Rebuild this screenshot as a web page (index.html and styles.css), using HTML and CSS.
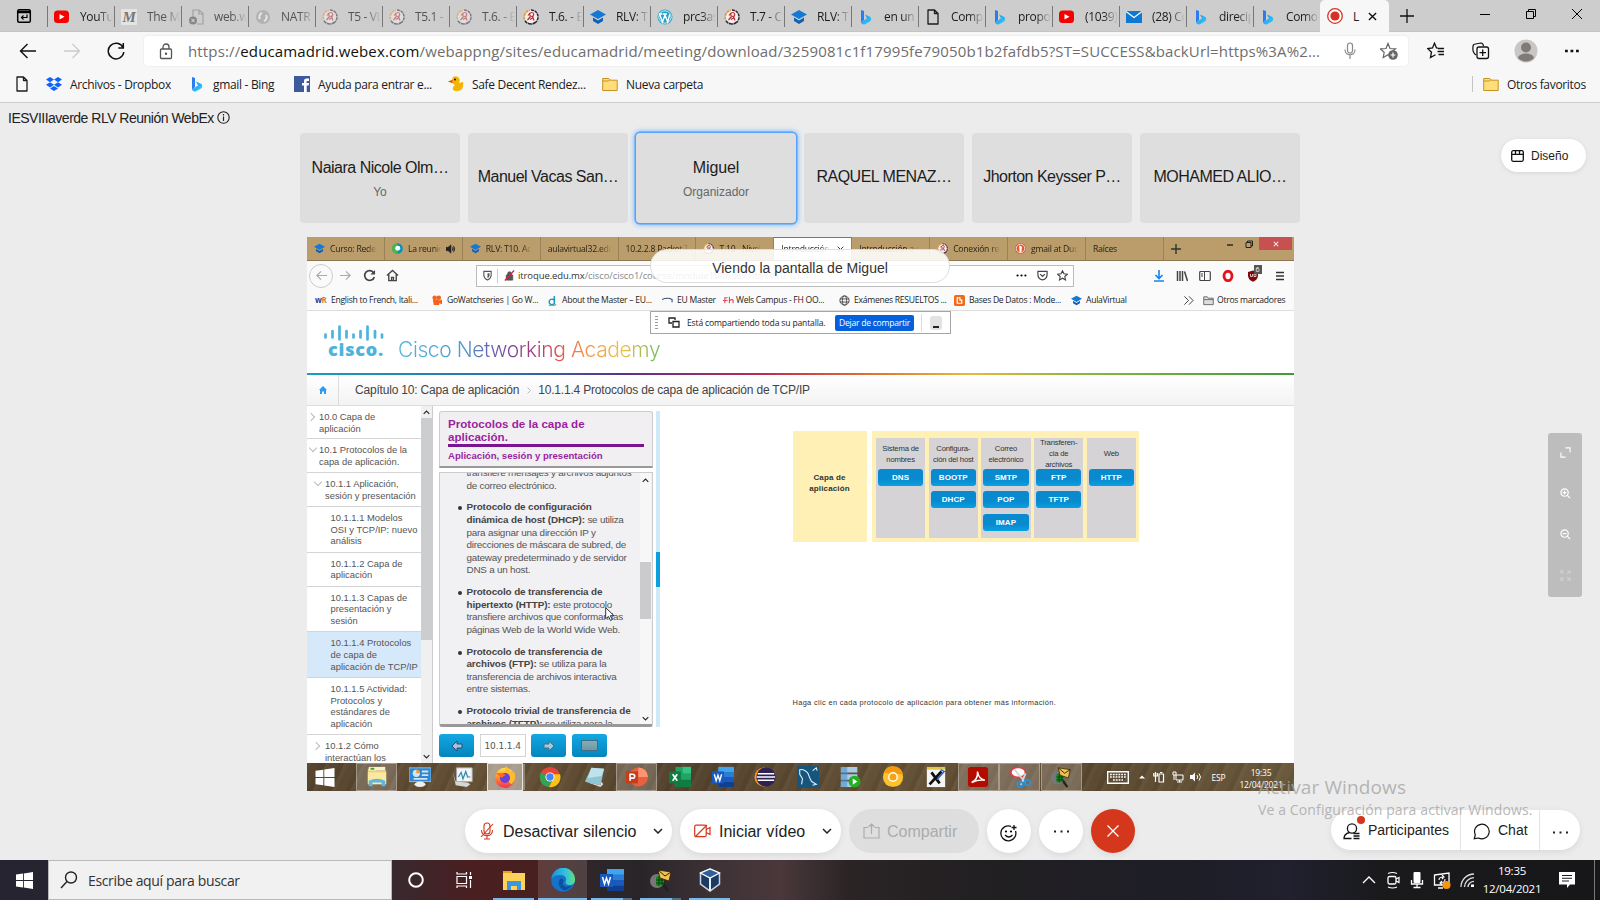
FILE: index.html
```html
<!DOCTYPE html>
<html lang="es">
<head>
<meta charset="utf-8">
<title>IESVIIIaverde RLV Reunión WebEx</title>
<link rel="stylesheet" href="styles.css">
</head>
<body>
<svg class="defs" width="0" height="0">
  <defs>
    <linearGradient id="gb" x1="0" y1="0" x2="1" y2="1"><stop offset="0" stop-color="#2a8cf0"/><stop offset="1" stop-color="#2fd0f5"/></linearGradient>
    <linearGradient id="ge" x1="0" y1="0" x2="1" y2="0"><stop offset="0" stop-color="#1b8fd8"/><stop offset=".6" stop-color="#35c1e0"/><stop offset="1" stop-color="#5fe07a"/></linearGradient>
    <linearGradient id="gf" x1="0" y1="0" x2="0" y2="1"><stop offset="0" stop-color="#ffe14d"/><stop offset=".5" stop-color="#ff8a2a"/><stop offset="1" stop-color="#f0305a"/></linearGradient>
  </defs>
  <symbol id="yt" viewBox="0 0 16 16"><rect y="1.5" width="15" height="12.5" rx="3.5" fill="#f60000"/><path d="M5.5 5v5.5L10.5 7.7z" fill="#fff"/></symbol>
  <symbol id="bing" viewBox="0 0 16 16"><path d="M3 1l3 1v9l-3 2.5z" fill="#2a7cf0"/><path d="M7 5.500l5 2.300c2 1.400 1.300 4-.4 5L7 15.300c-1.500.7-3.500 0-4-2L9 9.600z" fill="url(#gb)"/></symbol>
  <symbol id="cap" viewBox="0 0 16 16"><path d="M8 1L0 5.500 8 10l8-4.500z" fill="#1478d4"/><path d="M3 8.500v3.500l5 3 5-3V8.500l-5 3z" fill="#0d62b5"/></symbol>
  <symbol id="moodle" viewBox="0 0 16 16"><circle cx="8" cy="8" r="7" fill="#f6efe9"/><path d="M8 1a7 7 0 0 1 5 11.900" fill="none" stroke="#2b2440" stroke-width="1.500" stroke-dasharray="3 .7"/><path d="M13 12.900A7 7 0 0 1 2 11.600" fill="none" stroke="#2b2440" stroke-width="1.700" stroke-dasharray="4 .7"/><path d="M1.600 10.500A7 7 0 0 1 7 1.200" stroke="#d99a3c" stroke-width="1.600" fill="none" stroke-dasharray="3 .7"/><circle cx="8.700" cy="5.500" r="2" fill="none" stroke="#c8323a" stroke-width="1.200"/><path d="M7.500 7.500L4.500 11M9.500 7.500l1.500 4M7 4L5 6.500M7 10.500l2.500-1.500" stroke="#b02c3c" stroke-width="1.200"/></symbol>
  <symbol id="page" viewBox="0 0 16 16"><path d="M3 1h6.500L13 4.500V15H3zM9.500 1v3.500H13" fill="none" stroke="currentColor" stroke-width="1.300" stroke-linejoin="round"/></symbol>
  <symbol id="folder" viewBox="0 0 16 16"><path d="M.7 2.500h6l1.500 1.700h7V14.500H.7z" fill="#ffdd7d" stroke="#c4941c"/><path d="M.7 5h5.500l2-1.500" fill="none" stroke="#c4941c"/></symbol>
  <symbol id="word" viewBox="0 0 24 24"><path d="M7 1h17v22H7z" fill="#2b7cd3"/><path d="M7 1h17v5.500H7z" fill="#41a5ee"/><path d="M7 12h17v5.500H7z" fill="#185abd"/><path d="M7 17.500h17V23H7z" fill="#103f91"/><path d="M0 6h13v13H0z" fill="#185abd"/><path d="M2.500 9l2 7 2-6 2 6 2-7" stroke="#fff" stroke-width="1.500" fill="none"/></symbol>
  <symbol id="tracer" viewBox="0 0 24 24"><path d="M14 16l5 7" stroke="#222" stroke-width="2.500"/><circle cx="8" cy="13" r="7" fill="#777"/><path d="M7 9l8-3-1 11-7 1z" fill="#168d22"/><path d="M7 12h8M7 15h8M10 8v10M13 7v10" stroke="#062c08" stroke-width=".8"/><path d="M9 2l13 2-2 9-9-3z" fill="#efc255" stroke="#332200" stroke-width=".8"/><path d="M9 2l7 6 6-4" fill="none" stroke="#332200"/></symbol>
  <symbol id="files" viewBox="0 0 24 24"><path d="M1 3h9v18H1z" fill="#e3a21a"/><path d="M1 5h22v17H1z" fill="#fbd25a"/><path d="M5 13h14v9h-4v-4H9v4H5z" fill="#3b96dd"/></symbol>
  <symbol id="win" viewBox="0 0 16 16"><path d="M0 2.300L6.600 1.400V7.600H0zM7.400 1.300L16 0v7.600H7.400zM0 8.400h6.600v6.200L0 13.700zM7.400 8.400H16V16l-8.600-1.300z" fill="#fff"/></symbol>
  <symbol id="mag" viewBox="0 0 12 12"><circle cx="5" cy="5" r="4" fill="none" stroke="#fff" stroke-width="1.300"/><path d="M8 8l3 3M3 5h4" stroke="#fff" stroke-width="1.300"/></symbol>
  <symbol id="chev" viewBox="0 0 10 6"><path d="M1 1l4 4 4-4" fill="none" stroke="currentColor" stroke-width="1.500"/></symbol>
  <symbol id="globe" viewBox="0 0 12 12"><g fill="none" stroke="#444"><circle cx="6" cy="6" r="5"/><ellipse cx="6" cy="6" rx="2.300" ry="5"/><path d="M1 4.300h10M1 7.700h10"/></g></symbol>
</svg>

<header class="tabs">
  <div class="tabs-home"><svg width="16" height="16" viewBox="0 0 16 16"><rect x="1.700" y="1.700" width="12.600" height="12.600" rx="1.500" fill="none" stroke="#000" stroke-width="1.500"/><path d="M1.500 4h13" stroke="#000" stroke-width="2.500"/><path d="M11 6.500v3H5.500M7.500 7.500l-2 2 2 2" fill="none" stroke="#000" stroke-width="1.200"/></svg></div>
  <div class="tab"><svg><use href="#yt"/></svg><span>YouTube</span></div>
  <div class="tab dim"><i class="m-icon">M</i><span>The Me</span></div>
  <div class="tab dim"><svg viewBox="0 0 16 16"><path d="M5 8V1h6l4 3.500V15H9M11 1v4h4" fill="none" stroke="#777" stroke-width="1.200"/><circle cx="5" cy="11.500" r="4" fill="#444"/><path d="M3.500 10l3 3m0-3l-3 3" stroke="#fff"/></svg><span>web.wh</span></div>
  <div class="tab dim"><svg viewBox="0 0 16 16"><circle cx="8" cy="8" r="7" fill="#999"/><path d="M5 10a4 4 0 0 1 2-6M11 6a4 4 0 0 1-2 6" fill="none" stroke="#fff" stroke-width="2"/></svg><span>NATR</span></div>
  <div class="tab dim"><svg><use href="#moodle"/></svg><span>T5 - VL</span></div>
  <div class="tab dim"><svg><use href="#moodle"/></svg><span>T5.1 - E</span></div>
  <div class="tab dim"><svg><use href="#moodle"/></svg><span>T.6. - E</span></div>
  <div class="tab"><svg><use href="#moodle"/></svg><span>T.6. - E</span></div>
  <div class="tab"><svg><use href="#cap"/></svg><span>RLV: T1</span></div>
  <div class="tab"><svg viewBox="0 0 16 16"><circle cx="8" cy="8" r="7.500" fill="#21a1c9"/><circle cx="8" cy="8" r="6.200" fill="none" stroke="#fff" stroke-width=".8"/><path d="M2.500 5l3 8L8 6l2.700 7 2-7.500M2 5h3.500M6 5h4" fill="none" stroke="#fff" stroke-width="1.400"/></svg><span>prc3as</span></div>
  <div class="tab"><svg><use href="#moodle"/></svg><span>T.7 - C</span></div>
  <div class="tab"><svg><use href="#cap"/></svg><span>RLV: T1</span></div>
  <div class="tab"><svg><use href="#bing"/></svg><span>en un r</span></div>
  <div class="tab"><svg><use href="#page"/></svg><span>Compa</span></div>
  <div class="tab"><svg><use href="#bing"/></svg><span>propor</span></div>
  <div class="tab"><svg><use href="#yt"/></svg><span>(1039)</span></div>
  <div class="tab"><svg viewBox="0 0 16 16"><path d="M0 2h16v12H0z" fill="#0f78d4"/><path d="M0 2.500l8 6 8-6" fill="none" stroke="#fff" stroke-width="1.200"/></svg><span>(28) Co</span></div>
  <div class="tab"><svg><use href="#bing"/></svg><span>direcip</span></div>
  <div class="tab"><svg><use href="#bing"/></svg><span>Como</span></div>
  <div class="tab active"><svg viewBox="0 0 16 16"><circle cx="8" cy="8" r="7.300" fill="#fff" stroke="#d93025" stroke-width="1.300"/><circle cx="8" cy="8" r="4.600" fill="#d93025"/></svg><span>L</span><svg class="x" viewBox="0 0 10 10"><path d="M1 1l8 8M9 1L1 9" stroke="#111" stroke-width="1.500"/></svg></div>
  <svg class="plus" viewBox="0 0 14 14"><path d="M7 0v14M0 7h14" stroke="#111" stroke-width="1.300"/></svg>
  <div class="wbtns">
    <svg viewBox="0 0 12 12"><path d="M1 6.500h10" stroke="#000"/></svg>
    <svg viewBox="0 0 12 12"><path d="M1.500 3.500h7v7h-7zM3.500 3.500v-2h7v7h-2" fill="none" stroke="#000"/></svg>
    <svg viewBox="0 0 12 12"><path d="M1 1l10 10M11 1L1 11" stroke="#000"/></svg>
  </div>
</header>

<div class="toolbar">
  <svg class="nav" viewBox="0 0 18 18"><path d="M17 9H1.500M8.500 2l-7 7 7 7" fill="none" stroke="#111" stroke-width="1.400"/></svg>
  <svg class="nav" viewBox="0 0 18 18"><path d="M1 9h15.500M9.500 2l7 7-7 7" fill="none" stroke="#ccc" stroke-width="1.300"/></svg>
  <svg class="nav" viewBox="0 0 18 18"><path d="M16 5.500A7.800 7.800 0 1 0 16.800 10M16.300 1v5h-5" fill="none" stroke="#111" stroke-width="1.500"/></svg>
  <div class="url">
    <svg width="14" height="17" viewBox="0 0 14 17"><rect x="1.500" y="6" width="11" height="9.500" rx="1" fill="none" stroke="#555" stroke-width="1.300"/><path d="M4 6V4a3 3 0 0 1 6 0v2" fill="none" stroke="#555" stroke-width="1.300"/><circle cx="7" cy="10.800" r="1.200" fill="#555"/></svg>
    <span class="url-text">https://<b>educamadrid.webex.com</b>/webappng/sites/educamadrid/meeting/download/3259081c1f17995fe79050b1b2fafdb5?ST=SUCCESS&amp;backUrl=https%3A%2...</span>
    <svg class="mic" width="12" height="18" viewBox="0 0 12 18"><rect x="3.500" y="1" width="5" height="10" rx="2.500" fill="none" stroke="#888" stroke-width="1.200"/><path d="M1 7.500c0 7 10 7 10 0M6 13v4" fill="none" stroke="#888" stroke-width="1.200"/></svg>
    <svg width="18" height="18" viewBox="0 0 18 18"><path d="M8 1.500l2 5 5.500.3-4 3.500 1 5.200L8 12.800l-4.800 2.700 1-5.200-4-3.500L6 6.500z" fill="none" stroke="#666" stroke-width="1.200"/><circle cx="13" cy="13" r="4.800" fill="#666"/><path d="M13 10.500v5M10.500 13h5" stroke="#fff" stroke-width="1.200"/></svg>
  </div>
  <div class="tools">
    <svg width="18" height="18" viewBox="0 0 18 18"><path d="M11 6.200L9.500 6l-2-4.800-2 4.800L.8 6.600l3.700 3.600-1 5.300 5-2.800M11 6.500h6M10.500 9.500H17M11.500 12.500H17" fill="none" stroke="#111" stroke-width="1.300"/></svg>
    <svg width="18" height="18" viewBox="0 0 18 18"><path d="M4 13C1 11 .5 8 1 4.500Q1 2 3.500 2L9 1q2 0 2.500 3" fill="none" stroke="#111" stroke-width="1.200"/><rect x="5" y="5" width="11.500" height="11.500" rx="2" fill="none" stroke="#111" stroke-width="1.300"/><path d="M10.700 7.500v6.500M7.500 10.700H14" stroke="#111" stroke-width="1.300"/></svg>
    <svg width="24" height="24" viewBox="0 0 24 24"><circle cx="12" cy="12" r="11.500" fill="#c9c7c5"/><circle cx="12" cy="8.500" r="5" fill="#7e7b79"/><path d="M4 19c1-6 15-6 16 0a11 11 0 0 1-16 0z" fill="#7e7b79"/></svg>
    <svg width="14" height="4" viewBox="0 0 14 4"><path d="M0 .8h2.800v2.400H0zM5.500.8h2.800v2.400H5.500zM11 .8h2.800v2.400H11z" fill="#111"/></svg>
  </div>
</div>

<div class="favs">
  <svg width="16" height="18"><use href="#page"/></svg>
  <svg width="16" height="16" viewBox="0 0 16 16"><path d="M4 1l4 2.600-4 2.600-4-2.600zM12 1l4 2.600-4 2.600-4-2.600zM4 6.200l4 2.600-4 2.600-4-2.600zM12 6.200l4 2.600-4 2.600-4-2.600zM8 10l4 2.500-4 2.500-4-2.500z" fill="#0f62fe"/></svg><span>Archivos - Dropbox</span>
  <svg width="16" height="16"><use href="#bing"/></svg><span>gmail - Bing</span>
  <svg width="16" height="16" viewBox="0 0 16 16"><path d="M0 0h16v16H0z" fill="#3d5a9e"/><path d="M10 16V9.500h-2V7h2V5q0-2.500 2.500-2.500H15V5h-1.500q-1 0-1 1v1H15l-.3 2.500h-2V16z" fill="#fff"/></svg><span>Ayuda para entrar e...</span>
  <svg width="16" height="16" viewBox="0 0 16 16"><path d="M5 1q5-2 6.500 2 .5 3-1 4l4.500-1q1 5-2 8-4 2-7 .5Q3 12 7 9 5 8 4.500 7L0 5.500 4 4z" fill="#f5b400"/><path d="M0 5.500L4.500 4v3z" fill="#e2452d"/><circle cx="7" cy="3.500" r=".9"/></svg><span>Safe Decent Rendez...</span>
  <svg width="16" height="16"><use href="#folder"/></svg><span>Nueva carpeta</span>
  <i class="favs-sep"></i>
  <svg width="16" height="16"><use href="#folder"/></svg><span>Otros favoritos</span>
</div>

<main class="meeting">
  <div class="title">IESVIIIaverde RLV Reunión WebEx <svg width="13" height="13" viewBox="0 0 13 13"><circle cx="6.500" cy="6.500" r="5.700" fill="none" stroke="#222" stroke-width="1.100"/><path d="M6.500 5.500V10M6.500 3v1.400" stroke="#222" stroke-width="1.200"/></svg></div>

  <div class="people">
    <div class="tile"><b>Naiara Nicole Olm…</b><small>Yo</small></div>
    <div class="tile solo"><b>Manuel Vacas San…</b></div>
    <div class="tile speaking"><b>Miguel</b><small>Organizador</small></div>
    <div class="tile solo"><b>RAQUEL MENAZ…</b></div>
    <div class="tile solo"><b>Jhorton Keysser P…</b></div>
    <div class="tile solo"><b>MOHAMED ALIO…</b></div>
    <button class="layout-btn"><svg width="13" height="12" viewBox="0 0 13 12"><rect x=".7" y=".7" width="11.600" height="10.600" rx="1.500" fill="none" stroke="#111" stroke-width="1.300"/><path d="M.7 4.300h11.600M4.500.7v3.600M8.500.7v3.600" stroke="#111" stroke-width="1.300"/></svg>Diseño</button>
  </div>

  <div class="stage">
    <section class="screen">
      <div class="s-tabs">
        <div class="s-tab"><svg><use href="#cap"/></svg><span>Curso: Redes</span></div>
        <div class="s-tab"><svg viewBox="0 0 12 12"><circle cx="6" cy="6" r="5.800" fill="#0b8fb8"/><path d="M6 .2a5.800 5.800 0 0 0 0 11.600z" fill="#4ab848"/><circle cx="6.300" cy="5.800" r="2.700" fill="#fff"/></svg><span class="short">La reunión</span><svg class="snd" viewBox="0 0 12 12"><path d="M0 4h2.500L6 1v10L2.500 8H0zM7.500 3.500q2 2.500 0 5M9 2q3 4 0 8" fill="#222" stroke="#222" stroke-width=".6"/></svg></div>
        <div class="s-tab"><svg><use href="#cap"/></svg><span>RLV: T10. Ac</span></div>
        <div class="s-tab"><span>aulavirtual32.edu</span></div>
        <div class="s-tab"><span>10.2.2.8 Packet T</span></div>
        <div class="s-tab"><svg><use href="#moodle"/></svg><span>T.10 - Nivel</span></div>
        <div class="s-tab on"><span>Introducción</span><svg class="sx" viewBox="0 0 10 10"><path d="M1 1l8 8M9 1L1 9" stroke="#333" stroke-width="1.400"/></svg></div>
        <div class="s-tab"><span>Introducción a r</span></div>
        <div class="s-tab"><svg><use href="#moodle"/></svg><span>Conexión rem</span></div>
        <div class="s-tab"><svg viewBox="0 0 12 12"><circle cx="6" cy="6" r="5.800" fill="#de5833"/><circle cx="6" cy="6" r="4.600" fill="none" stroke="#fff" stroke-width=".8"/><path d="M4.500 3q3-.5 3 2l-.5 5H5z" fill="#fff"/></svg><span>gmail at Duc</span></div>
        <div class="s-tab last"><span>Raíces</span></div>
        <svg class="s-plus" viewBox="0 0 10 10"><path d="M5 0v10M0 5h10" stroke="#333" stroke-width="1.400"/></svg>
        <div class="s-win"><svg viewBox="0 0 8 8"><path d="M1 5h6" stroke="#222" stroke-width="1.400"/></svg><svg viewBox="0 0 8 8"><path d="M1 2.500h5v5H1zM2.500 2.500V1h5v5H6" fill="none" stroke="#222"/></svg></div>
        <div class="s-close"><svg viewBox="0 0 8 8"><path d="M1 1l6 6M7 1L1 7" stroke="#fff" stroke-width="1.400"/></svg></div>
      </div>

      <div class="s-bar">
        <i class="s-back"><svg viewBox="0 0 14 14"><path d="M13 7H2M6.500 2.500L2 7l4.500 4.500" fill="none" stroke="#aaa" stroke-width="1.300"/></svg></i>
        <svg viewBox="0 0 14 14"><path d="M1 7h11M7.500 2.500L12 7l-4.500 4.500" fill="none" stroke="#aaa" stroke-width="1.300"/></svg>
        <svg viewBox="0 0 14 14"><path d="M11.500 4A5.300 5.300 0 1 0 12.200 8.500" fill="none" stroke="#444" stroke-width="1.800"/><path d="M13 1v5H8z" fill="#444"/></svg>
        <svg viewBox="0 0 14 14"><path d="M1 7l6-5.500L13 7M3 6v6.500h8V6M6 12.500V9h2v3.500" fill="none" stroke="#444" stroke-width="1.500"/></svg>
        <div class="s-url">
          <svg viewBox="0 0 12 12"><path d="M2 1.500h8V6q-.5 3.500-4 5-3.500-1.500-4-5z" fill="none" stroke="#555" stroke-width="1.200"/><path d="M6 3.500V9q2-1 2.200-3V3.500z" fill="#555"/></svg>
          <i></i>
          <svg viewBox="0 0 12 12"><path d="M2.500 5.500h7v5.500h-7zM4 5.500V4q0-2 2-2t2 2v1.500" fill="#555" stroke="#555"/><path d="M1 11.500L11 .5" stroke="#d8204a" stroke-width="1.500"/></svg>
          <span><b>itroque.edu.mx</b>/cisco/cisco1/course/module10/index.html#10.1.1.4</span>
          <svg viewBox="0 0 14 12"><circle cx="2" cy="6" r="1.400"/><circle cx="7" cy="6" r="1.400"/><circle cx="12" cy="6" r="1.400"/></svg>
          <svg viewBox="0 0 12 12"><path d="M1 1.500h10V5q0 5-5 5.700Q1 10 1 5zM3.500 4.500L6 7l2.500-2.500" fill="none" stroke="#444" stroke-width="1.300"/></svg>
          <svg viewBox="0 0 12 12"><path d="M6 .8l1.600 3.400 3.700.4-2.800 2.500.8 3.800L6 9l-3.300 1.900.8-3.800L.7 4.600l3.700-.4z" fill="none" stroke="#444" stroke-width="1.200"/></svg>
        </div>
        <div class="s-ext">
          <svg viewBox="0 0 12 12"><path d="M6 0v8M2.500 5L6 8.500 9.500 5M1 11h10" fill="none" stroke="#1684e8" stroke-width="1.600"/></svg>
          <svg viewBox="0 0 12 12"><path d="M1.500 1v10M4 1v10M6.500 1v10M8.500 1.500l3 9.500" stroke="#444" stroke-width="1.500"/></svg>
          <svg viewBox="0 0 12 12"><rect x=".7" y="1.500" width="10.600" height="9" rx="1" fill="none" stroke="#444" stroke-width="1.200"/><path d="M5.500 1.500v9M2 4h2M2 6h2" stroke="#444"/></svg>
          <svg viewBox="0 0 12 12"><ellipse cx="6" cy="6" rx="4" ry="4.700" fill="none" stroke="#e5101c" stroke-width="2.800"/></svg>
          <span class="ublock"><svg viewBox="0 0 12 12"><path d="M1 2l5-1.500L11 2v4q-.5 4-5 5.800Q1.500 10 1 6z" fill="#800a0a"/><path d="M3.500 4v2.500h2V4M7 4v2.500h2V4z" fill="none" stroke="#fff" stroke-width=".7"/></svg><em>6</em></span>
          <svg viewBox="0 0 12 12"><path d="M2 2.500h8M2 6h8M2 9.500h8" stroke="#333" stroke-width="1.300"/></svg>
        </div>
      </div>

      <div class="s-marks">
        <i class="wr">w<b>R</b></i><span>English to French, Itali...</span>
        <svg viewBox="0 0 12 12"><circle cx="4" cy="3" r="2.500" fill="#f4641e"/><circle cx="8.500" cy="3" r="2.500" fill="#f4641e"/><path d="M2 5h7v6H3zM9 6l3-1v5l-3-1z" fill="#f4641e"/></svg><span>GoWatchseries | Go W...</span>
        <svg viewBox="0 0 12 12"><path d="M8 1v9M8 6a3 3 0 1 0 0 3" fill="none" stroke="#1e9ab8" stroke-width="1.600"/><path d="M2 11q4 2 8-1" stroke="#7ab83a" stroke-width="1.300" fill="none"/></svg><span>About the Master – EU...</span>
        <svg viewBox="0 0 12 12"><path d="M0 5q6-3 11 0v3" stroke="#36506a" stroke-width="1.200" fill="none"/></svg><span>EU Master</span>
        <svg viewBox="0 0 12 12"><path d="M2 9V3h3M0 6h5M7 2v7M7 6q4-2 4 0v3" stroke="#e0485a" stroke-width="1.200" fill="none"/></svg><span>Wels Campus - FH OO...</span>
        <svg><use href="#globe"/></svg><span>Exámenes RESUELTOS ...</span>
        <svg viewBox="0 0 12 12"><rect width="12" height="12" rx="2" fill="#f06a1a"/><path d="M3.500 3h3v2.500h2V9h-5z" fill="none" stroke="#fff" stroke-width="1.300"/></svg><span>Bases De Datos : Mode...</span>
        <svg><use href="#cap"/></svg><span>AulaVirtual</span>
        <svg viewBox="0 0 12 12"><path d="M1.500 1.500L6 6l-4.500 4.500M6.500 1.500L11 6l-4.500 4.500" fill="none" stroke="#333"/></svg>
        <svg viewBox="0 0 12 12"><path d="M.8 2h4l1 1.500h5.400v7H.8z" fill="#ddd" stroke="#666"/><path d="M1 5h10" stroke="#666"/></svg><span>Otros marcadores</span>
      </div>

      <div class="cisco">
        <div class="cisco-logo">
          <svg width="60" height="16" viewBox="0 0 60 16"><path d="M1.500 9.500v3M8.500 6v6.500M15.500 1.500v13M22.500 6v6.500M29.500 9.500v3M36.500 6v6.500M43.500 1.500v13M51 6v6.500M58 9.500v3" stroke="#4db3dc" stroke-width="2.700" stroke-linecap="round"/></svg>
          <b>cisco.</b>
        </div>
        <span class="academy">Cisco Networking Academy</span>
      </div>
      <div class="rainbow"></div>
      <div class="crumbs">
        <i><svg width="8" height="8" viewBox="0 0 8 8"><path d="M4 0L0 4h1v4h2V5.500h2V8h2V4h1z" fill="#2e9bf0"/></svg></i>
        <span>Capítulo 10: Capa de aplicación</span>
        <svg class="sep" width="4" height="7" viewBox="0 0 4 7"><path d="M.5.5l3 3-3 3" fill="none" stroke="#bbb"/></svg>
        <span>10.1.1.4 Protocolos de capa de aplicación de TCP/IP</span>
      </div>

      <div class="course">
        <nav class="toc">
          <div class="h1 folded first">10.0 Capa de<br>aplicación</div>
          <div class="h1 unfolded">10.1 Protocolos de la<br>capa de aplicación.</div>
          <div class="h2 unfolded">10.1.1 Aplicación,<br>sesión y presentación</div>
          <div class="h3 three">10.1.1.1 Modelos<br>OSI y TCP/IP: nuevo<br>análisis</div>
          <div class="h3">10.1.1.2 Capa de<br>aplicación</div>
          <div class="h3 three">10.1.1.3 Capas de<br>presentación y<br>sesión</div>
          <div class="h3 three cur">10.1.1.4 Protocolos<br>de capa de<br>aplicación de TCP/IP</div>
          <div class="h3 four">10.1.1.5 Actividad:<br>Protocolos y<br>estándares de<br>aplicación</div>
          <div class="h2 folded">10.1.2 Cómo<br>interactúan los</div>
        </nav>
        <div class="vscroll"><svg class="up"><use href="#chev"/></svg><i></i><svg><use href="#chev"/></svg></div>
        <div class="lesson">
          <header><h2>Protocolos de la capa de<br>aplicación.</h2><h3>Aplicación, sesión y presentación</h3></header>
          <div class="lesson-body">
            <div class="lesson-text">
              <p>transfiere mensajes y archivos adjuntos<br>de correo electrónico.</p>
              <p class="li"><b>Protocolo de configuración<br>dinámica de host (DHCP):</b> se utiliza<br>para asignar una dirección IP y<br>direcciones de máscara de subred, de<br>gateway predeterminado y de servidor<br>DNS a un host.</p>
              <p class="li"><b>Protocolo de transferencia de<br>hipertexto (HTTP):</b> este protocolo<br>transfiere archivos que conforman las<br>páginas Web de la World Wide Web.</p>
              <p class="li"><b>Protocolo de transferencia de<br>archivos (FTP):</b> se utiliza para la<br>transferencia de archivos interactiva<br>entre sistemas.</p>
              <p class="li"><b>Protocolo trivial de transferencia de<br>archivos (TFTP):</b> se utiliza para la</p>
            </div>
            <div class="lscroll"><svg class="up"><use href="#chev"/></svg><i></i><svg><use href="#chev"/></svg></div>
            <svg class="cursor" width="10" height="15" viewBox="0 0 10 15"><path d="M.7.700v11l2.800-2.200 2 4 1.800-1-2-3.800h3.700z" fill="#fff" stroke="#333"/></svg>
          </div>
          <footer>
            <button><svg viewBox="0 0 12 12"><path d="M1 6l5-5v3h5v4H6v3z" fill="#a9c3d8" stroke="#2f4a78"/></svg></button>
            <span>10.1.1.4</span>
            <button><svg viewBox="0 0 12 12"><path d="M11 6L6 1v3H1v4h5v3z" fill="#a9c8d4" stroke="#3a7590"/></svg></button>
            <button><i></i></button>
          </footer>
        </div>
        <div class="strip"><i></i></div>
        <div class="figure">
          <div class="diagram">
            <div class="layer">Capa de<br>aplicación</div>
            <div class="cols">
              <div><p>Sistema de<br>nombres</p><b>DNS</b></div>
              <div><p>Configura-<br>ción del host</p><b>BOOTP</b><b>DHCP</b></div>
              <div><p>Correo<br>electrónico</p><b>SMTP</b><b>POP</b><b>IMAP</b></div>
              <div><p>Transferen-<br>cia de<br>archivos</p><b>FTP</b><b>TFTP</b></div>
              <div><p>Web</p><b>HTTP</b></div>
            </div>
          </div>
          <p class="hint">Haga clic en cada protocolo de aplicación para obtener más información.</p>
        </div>
      </div>

      <div class="s-task">
        <i><svg width="20" height="19"><use href="#win"/></svg></i>
        <i class="grip"></i>
        <i class="run"><svg viewBox="0 0 24 24"><path d="M2 3h8l1 2h11v14H2z" fill="#f0d273"/><path d="M3 1h18v4H3z" fill="#f7f0c8"/><path d="M5 2h4v2H5z" fill="#3aa03a"/><path d="M2 7h20v13H2z" fill="#fbe9a0"/><path d="M3 22v-6q9-4 18 0v6h-4v-4H7v4z" fill="#5db7e0"/></svg></i>
        <i><svg viewBox="0 0 24 24"><path d="M0 2h24v15H0z" fill="#2f86d0" stroke="#8cc4ee"/><circle cx="8" cy="8" r="4" fill="#cfe6f7"/><path d="M8 8V4a4 4 0 0 1 4 4z" fill="#f39a20"/><path d="M14 6h7M14 10h7M5 14h15" stroke="#cfe6f7" stroke-width="2"/><ellipse cx="12" cy="20" rx="6" ry="3" fill="#eee"/></svg></i>
        <i><svg viewBox="0 0 24 24"><path d="M5 2h17v15H5z" fill="#f2f4f6" stroke="#aaa"/><path d="M7 12l3-5 2 7 3-8 2 6h3" fill="none" stroke="#2a86a8" stroke-width="1.300"/><path d="M1 7l3 10 13 1 3 2-4 3-12-2z" fill="#d4d6d8"/></svg></i>
        <i class="run hot"><svg viewBox="0 0 24 24"><circle cx="12" cy="13" r="11" fill="url(#gf)"/><path d="M13 0q5 4 6 9l3-3q3 9-3 14l-9-8z" fill="#ffbd2e"/><circle cx="12" cy="13" r="5.500" fill="#6a3fd8"/><path d="M2 8q4-1 7 0l4 2q-3 0-4 3-3-1-7-5z" fill="#ff6a2a"/></svg></i>
        <i><svg viewBox="0 0 24 24"><circle cx="12" cy="12" r="11" fill="#e8453a"/><path d="M2 7A11 11 0 0 0 11 23l4-9z" fill="#32a350"/><path d="M23 9H12l3 6-4 8A11 11 0 0 0 23 9z" fill="#fbc116"/><circle cx="12" cy="12" r="5" fill="#fff"/><circle cx="12" cy="12" r="4" fill="#4487f4"/></svg></i>
        <i><svg viewBox="0 0 24 24"><path d="M8 2l14 1-4 18L1 17z" fill="#8fc6d4"/><path d="M8 2l14 1-3 8L4 13z" fill="#bfe3ea"/><path d="M1 17l17 4 1-4 2 3-3 3z" fill="#ddd"/></svg></i>
        <i class="run"><svg viewBox="0 0 24 24"><circle cx="13.500" cy="12" r="10.400" fill="#e9603f"/><path d="M13.500 1.600A10.400 10.400 0 0 1 23.900 12H13.500z" fill="#ff9472"/><path d="M0 6h13v13H0z" fill="#c43e1c"/><path d="M4.500 16V9H7q2.500 0 2.500 2.200T7 13.300H5" fill="none" stroke="#fff" stroke-width="1.800"/></svg></i>
        <i><svg viewBox="0 0 24 24"><path d="M7 1h17v22H7z" fill="#21a366"/><path d="M15 1h9v7h-9z" fill="#33c481"/><path d="M7 15h17v8H7z" fill="#107c41"/><path d="M0 6h13v13H0z" fill="#107c41"/><path d="M4 9l5 7M9 9l-5 7" stroke="#fff" stroke-width="1.800"/></svg></i>
        <i><svg><use href="#word"/></svg></i>
        <i><svg viewBox="0 0 24 24"><circle cx="11" cy="12" r="10.500" fill="#f7941e"/><circle cx="13" cy="12" r="10.500" fill="#2c2255"/><path d="M4 8.500h18M3 12h20M4 15.500h18" stroke="#fff" stroke-width="1.700"/></svg></i>
        <i><svg viewBox="0 0 24 24"><rect y="0" width="24" height="24" rx="2" fill="#16557e"/><path d="M5 20l1-6-3-5V4q5-1 9 4 2 6 4 9l5 3-4 1M17 5l4-3 1 3" fill="none" stroke="#e6f0f6" stroke-width="1.200"/></svg></i>
        <i><svg viewBox="0 0 24 24"><path d="M2 1h18v6H2zM2 9h18v6H2zM2 17h12v6H2z" fill="#a9cde8"/><path d="M2 1h7v22H2z" fill="#4c93cb" opacity=".6"/><circle cx="17" cy="17" r="6.500" fill="#20b020"/><path d="M15 13.500v7l5-3.500z" fill="#fff"/></svg></i>
        <i><svg viewBox="0 0 24 24"><circle cx="12" cy="12" r="11" fill="#fbc22c"/><path d="M2 7a11 11 0 0 1 21 2H12z" fill="#f59a10"/><circle cx="12" cy="12" r="4.600" fill="#f6a317" stroke="#fff" stroke-width="1.500"/></svg></i>
        <i><svg viewBox="0 0 24 24"><path d="M2 3h20v20H2z" fill="#f4f4f4"/><path d="M2 1h20v3H2z" fill="#d9c84a"/><path d="M7 7l9 12M18 6L5 20" stroke="#111" stroke-width="3"/><path d="M17 4l4 2-8 9" stroke="#2a62c8" stroke-width="1.500" fill="none"/></svg></i>
        <i class="run"><svg viewBox="0 0 24 24"><rect x="1" y="1" width="22" height="22" rx="3" fill="#b30b00"/><path d="M5 18q7-3 6.500-12 1 8 8 9.500-7-1-14.500 2.500z" fill="none" stroke="#fff" stroke-width="1.600"/></svg></i>
        <i class="run"><svg viewBox="0 0 24 24"><ellipse cx="10" cy="7" rx="8" ry="5.500" fill="#fff" stroke="#d8404a" stroke-width="2"/><path d="M6 4l12 14M18 8l-5 13" stroke="#cfd8de" stroke-width="2"/><circle cx="12" cy="20" r="3" fill="none" stroke="#2f8fd0" stroke-width="2"/><circle cx="20" cy="18" r="3" fill="none" stroke="#2f8fd0" stroke-width="2"/></svg></i>
        <i class="run"><svg><use href="#tracer"/></svg></i>
        <i class="grip"></i>
        <i><svg width="22" height="13" viewBox="0 0 22 13"><path d="M.7.700h20.600v11.600H.7z" fill="none" stroke="#fff" stroke-width="1.400"/><path d="M3 3.500h16M3 6h16M6 9h10" stroke="#fff" stroke-width="1.500" stroke-dasharray="1.800 1"/></svg></i>
        <i><svg width="6" height="4" viewBox="0 0 6 4"><path d="M0 3.500L3 .5l3 3z" fill="#fff"/></svg></i>
        <i><svg width="12" height="12" viewBox="0 0 12 12"><path d="M2.500 1v10M.8 2v3h3.500V2M6 3h4.500v8H6zM7 1.500h2.500" fill="none" stroke="#fff" stroke-width="1.200"/></svg></i>
        <i><svg width="12" height="12" viewBox="0 0 12 12"><path d="M4 4h7v5H4zM7.500 9v2M5 11h5M1 1h3v3H1zM2 4v5" fill="none" stroke="#fff"/></svg></i>
        <i><svg width="12" height="12" viewBox="0 0 12 12"><path d="M0 4h2.500L5 1.500v9L2.500 8H0z" fill="#fff"/><path d="M7 4q1.500 2 0 4M9 2.500q3 3.500 0 7" fill="none" stroke="#fff"/></svg></i>
        <i class="esp">ESP</i>
        <i class="s-clock"><span>19:35<br>12/04/2021</span></i>
      </div>

      <div class="share">
        <i class="dots"></i>
        <svg width="12" height="11" viewBox="0 0 12 11"><path d="M4 6H1V1h6v2M5 4.500h6v5.500H5z" fill="none" stroke="#222" stroke-width="1.300"/></svg>
        <span>Está compartiendo toda su pantalla.</span>
        <b>Dejar de compartir</b>
        <i class="bar"></i><i class="min"></i>
      </div>
      <div class="viewing">Viendo la pantalla de Miguel</div>
    </section>

    <aside class="zoom">
      <svg viewBox="0 0 12 12"><path d="M6 1h5v5M1 6v5h5" fill="none" stroke="#fff" stroke-width="1.200"/></svg>
      <svg viewBox="0 0 12 12"><use href="#mag"/><path d="M5 3v4" stroke="#fff" stroke-width="1.300"/></svg>
      <svg viewBox="0 0 12 12"><use href="#mag"/></svg>
      <svg viewBox="0 0 12 12"><path d="M1 4V1h3M8 1h3v3M11 8v3H8M4 11H1V8M1 1l3.500 3.500M11 1L7.500 4.500M11 11L7.500 7.500M1 11l3.500-3.500" fill="none" stroke="#d0d0d0" stroke-width="1.200"/></svg>
    </aside>
  </div>

  <div class="controls">
    <button class="pill p1"><svg width="14" height="18" viewBox="0 0 14 18"><rect x="4" y="1" width="6" height="11" rx="3" fill="none" stroke="#d4371c" stroke-width="1.100"/><path d="M1.500 8c0 7.500 11 7.500 11 0M7 14v3M4 17h6M13 2L1 15" fill="none" stroke="#d4371c" stroke-width="1.100"/></svg><span>Desactivar silencio</span><svg class="dn"><use href="#chev"/></svg></button>
    <button class="pill p2"><svg width="17" height="14" viewBox="0 0 17 14"><rect x=".7" y="1.200" width="11.500" height="11.500" rx="1.500" fill="none" stroke="#d4371c" stroke-width="1.200"/><path d="M12.200 5.500l3.800-2v7l-3.800-2M1 13L13 1" fill="none" stroke="#d4371c" stroke-width="1.200"/></svg><span>Iniciar vídeo</span><svg class="dn"><use href="#chev"/></svg></button>
    <button class="pill p3"><svg width="17" height="16" viewBox="0 0 17 16"><path d="M5 4.500H1V15h15V4.500h-4M8.500 11V1M5.500 4l3-3 3 3" fill="none" stroke="#acacac" stroke-width="1.200"/></svg><span>Compartir</span></button>
    <button class="round emoji"><svg width="18" height="18" viewBox="0 0 18 18"><path d="M15.500 7A7.500 7.500 0 1 1 11 2.300" fill="none" stroke="#111" stroke-width="1.300"/><path d="M14 1v5M11.500 3.500h5M5 11q4 4 7.500 0" fill="none" stroke="#111" stroke-width="1.300"/><circle cx="6" cy="7.500" r="1.100"/><circle cx="11" cy="7.500" r="1.100"/></svg></button>
    <button class="round"><svg width="15" height="3" viewBox="0 0 15 3"><path d="M0 .5h2v2H0zM6.500.5h2v2h-2zM13 .5h2v2h-2z" fill="#222"/></svg></button>
    <button class="round end"><svg width="12" height="12" viewBox="0 0 12 12"><path d="M.5.5l11 11M11.500.5l-11 11" stroke="#fff" stroke-width="1.300"/></svg></button>
    <div class="side">
      <button class="part"><svg width="18" height="17" viewBox="0 0 18 17"><circle cx="9" cy="5.500" r="4.600" fill="none" stroke="#111" stroke-width="1.300"/><path d="M6.500 9.500Q1 11 1 15.500h7.500M10.500 10.500h6M10.500 13h6M10.500 15.500h6" fill="none" stroke="#111" stroke-width="1.300"/></svg>Participantes<em></em></button>
      <button class="chat"><svg width="17" height="17" viewBox="0 0 17 17"><path d="M1.300 15.700l1-4A7.300 7.300 0 1 1 5.500 15z" fill="none" stroke="#111" stroke-width="1.200"/></svg>Chat</button>
      <button class="more"><svg width="15" height="3" viewBox="0 0 15 3"><path d="M0 .5h2v2H0zM6.500.5h2v2h-2zM13 .5h2v2h-2z" fill="#222"/></svg></button>
    </div>
  </div>
</main>

<footer class="taskbar">
  <i class="start"><svg width="17" height="17"><use href="#win"/></svg></i>
  <div class="search"><svg width="18" height="18" viewBox="0 0 18 18"><circle cx="11" cy="6.500" r="5.500" fill="none" stroke="#222" stroke-width="1.400"/><path d="M7 10.500l-6 6.500" stroke="#222" stroke-width="1.400"/></svg>Escribe aquí para buscar</div>
  <i class="app"><svg width="16" height="16" viewBox="0 0 16 16"><circle cx="8" cy="8" r="6.800" fill="none" stroke="#fff" stroke-width="2"/></svg></i>
  <i class="app"><svg width="17" height="16" viewBox="0 0 17 16"><path d="M1 4.500h9.500v7H1zM1 0v2h9.500V0M1 16v-2h9.500v2M14.500 0v3M14.500 8v8" fill="none" stroke="#fff" stroke-width="1.200"/><path d="M13 4h3v3h-3z" fill="#fff"/></svg></i>
  <i class="app open"><svg><use href="#files"/></svg></i>
  <i class="app open front"><svg viewBox="0 0 24 24"><circle cx="12" cy="12" r="11.800" fill="#1572c8"/><path d="M.5 11A11.700 11.700 0 0 1 24 12q0 4-4 5-6 0-5.500-3Q17 8 10 7 3 7 .5 11z" fill="url(#ge)"/><path d="M9 11q-4 7 4 11.500 5-1 8-5-8 3-9.500-2 0-2 1.500-3-2-3-4-1.500z" fill="#0c4fa0"/></svg></i>
  <i class="app open multi"><svg><use href="#word"/></svg></i>
  <i class="app open multi"><svg><use href="#tracer"/></svg></i>
  <i class="app open"><svg viewBox="0 0 24 24"><path d="M12 1l9.500 4v11L12 23l-9.500-7V5z" fill="#1b3a63" stroke="#c8d4e2" stroke-width="1.500"/><path d="M12 1l9.500 4L12 10 2.500 5z" fill="#2f5f99" stroke="#fff" stroke-width="1.200"/><path d="M12 10v13" stroke="#e6edf5" stroke-width="2"/></svg></i>
  <div class="tray">
    <svg viewBox="0 0 18 18"><path d="M3 12l6-6 6 6" fill="none" stroke="#fff" stroke-width="1.400"/></svg>
    <svg viewBox="0 0 18 18"><rect x="4" y="5.500" width="8" height="7.500" rx="1.500" fill="none" stroke="#fff" stroke-width="1.300"/><path d="M12 8l3-1.500v5L12 10M4 2.500q4.500-2 9 0M4 16q4.500 2 9 0" fill="none" stroke="#fff" stroke-width="1.200"/></svg>
    <svg viewBox="0 0 18 18"><rect x="5.500" y="1" width="7" height="11" rx="1" fill="#fff"/><path d="M3.500 9v4h11V9M9 13v3M5.500 16.500h7" fill="none" stroke="#fff" stroke-width="1.300"/></svg>
    <svg viewBox="0 0 18 18"><path d="M1.500 4L16 2v12H1.500zM5 17h5" fill="none" stroke="#fff" stroke-width="1.300"/><path d="M6 9q0-3 4-3M12 8q0 4-4 4M9 4l2 2-2 2M9 10l-2 2 2 2" fill="none" stroke="#fff" stroke-width="1.100"/><circle cx="13.500" cy="14" r="4" fill="#f7960c"/></svg>
    <svg viewBox="0 0 18 18"><g fill="none" stroke="#ddd" stroke-width="1.300"><path d="M3 16A13 13 0 0 1 16 3M6.500 16A9.500 9.500 0 0 1 16 6.700M10 16a6 6 0 0 1 6-5.700"/></g><path d="M13 13.500h3V16h-3z" fill="#fff"/></svg>
    <span class="clock">19:35<br>12/04/2021</span>
    <svg viewBox="0 0 18 18"><path d="M1 1h16v12.500h-5L9 17v-3.500H1z" fill="#fff"/><path d="M4 4.500h10M4 7.300h10M4 10h7" stroke="#1a1a1e" stroke-width="1.100"/></svg>
    <i></i>
  </div>
</footer>

<div class="activate"><p>Activar Windows</p><p>Ve a Configuración para activar Windows.</p></div>
</body>
</html>
```
FILE: styles.css
```css
* { box-sizing: border-box; }
body, p, h2, h3 { margin: 0; }
i, em { font-style: normal; }
b { font-weight: inherit; }
svg { display: block; flex: none; }
button { border: 0; padding: 0; margin: 0; background: none; font: inherit; color: inherit; }
body {
  width: 1600px; height: 900px; overflow: hidden; position: relative;
  display: grid; grid-template-rows: 32px 37px 34px 757px 40px;
  font-family: "Open Sans", "Noto Sans", sans-serif; white-space: nowrap; color: #1c1c1c;
}
.defs { position: absolute; }

/* browser tabs */
.tabs { display: flex; background: #cdcdcd; align-items: stretch; overflow: hidden; box-shadow: inset 0 -1px #c4c4c4; }
.tabs-home { width: 47px; display: flex; align-items: center; justify-content: center; }
.tab { width: 67px; flex: none; display: flex; align-items: center; border-left: 1px solid #777; height: 21px; margin-top: 6px; padding-left: 6px; font-size: 12px; letter-spacing: -.35px; }
.tab svg { width: 16px; height: 16px; }
.tab span { margin-left: 10px; width: 33px; overflow: hidden; -webkit-mask-image: linear-gradient(90deg, #000 55%, transparent); mask-image: linear-gradient(90deg, #000 55%, transparent); }
.tab.dim { color: #555; }
.tab.dim svg { opacity: .5; }
.m-icon { width: 16px; height: 16px; background: #e4e4e4; font: italic bold 15px/16px "Liberation Serif", serif; text-align: center; color: #777; }
.tab.active { width: 69px; height: 32px; margin-top: 0; padding-left: 7px; border: 0; background: #f7f7f7; border-radius: 5px 5px 0 0; }
.tab.active span { width: 7px; -webkit-mask-image: none; mask-image: none; }
.tab.active .x { width: 9px; height: 9px; margin-left: 8px; }
.plus { width: 14px; height: 14px; margin: 9px 0 0 11px; }
.wbtns { display: flex; gap: 34px; margin: 8px 0 0 auto; padding-right: 17px; }
.wbtns svg { width: 12px; height: 12px; }

/* address bar */
.toolbar { display: flex; background: #f7f7f7; padding: 4px 0 3px 19px; align-items: center; }
.nav { width: 18px; height: 18px; margin-right: 26px; }
.url { margin-left: -7px; width: 1264px; height: 30px; background: #fff; border-radius: 4px; box-shadow: 0 0 2px #ddd; display: flex; align-items: center; padding-left: 15px; }
.url-text { margin-left: 15px; width: 1156px; font-size: 15px; color: #6e6e6e; letter-spacing: .14px; }
.url-text b { color: #111; }
.url .mic { margin-right: 24px; }
.tools { display: grid; grid-template-columns: 44px 45px 46px 46px; justify-items: center; align-items: center; margin-left: 6px; }

/* favourites */
.favs { display: grid; grid-template-columns: 32px 24px 119px 24px 81px 24px 130px 24px 130px 24px 846px 11px 24px 90px; padding-left: 14px; align-items: center; background: #f7f7f7; border-bottom: 1.500px solid #cbcbcb; font-size: 12px; letter-spacing: -.32px; padding-bottom: 3px; }
.favs-sep { width: 1px; height: 16px; background: #c4c4c4; }

/* meeting */
.meeting { background: #ececec; display: grid; grid-template-rows: 30px 104px 554px 69px; font-family: "Liberation Sans", Arial, sans-serif; }
.title { display: flex; align-items: center; gap: 3px; padding-left: 8px; font-size: 14px; letter-spacing: -.5px; color: #222; height: 29px; }
.people { display: flex; gap: 8px; padding-left: 300px; }
.tile { width: 160px; height: 90px; border-radius: 4px; background: #dedede; display: flex; flex-direction: column; align-items: center; justify-content: center; gap: 8px; font-size: 16px; letter-spacing: -.5px; }
.tile small { font-size: 12px; color: #666; line-height: 14px; margin-bottom: -1px; letter-spacing: 0; }
.tile b { line-height: 18px; }
.solo { padding-bottom: 3px; }
.tile.speaking { box-shadow: 0 0 0 1.500px #55a3fb, 0 0 5px 2px #7fb8fa; letter-spacing: -.1px; }
.layout-btn { margin: 6px 0 0 193px; width: 85px; height: 33px; border-radius: 17px; background: #fff; box-shadow: 0 1px 4px #d4d4d4; display: flex; align-items: center; gap: 7px; padding-left: 10px; font-size: 12px; }
.stage { display: grid; grid-template-columns: 987px 34px; gap: 254px; padding-left: 307px; }
.zoom { margin-top: 196px; height: 164px; border-radius: 3px; background: #bdbdbd; display: flex; flex-direction: column; align-items: center; gap: 30px; padding-top: 14px; }
.zoom svg { width: 11px; height: 11px; }

/* shared screen */
.screen { position: relative; background: #fff; display: grid; grid-template-rows: 24px 29px 21px 62px 2px 31px 357px 28px; overflow: hidden; font-family: "Open Sans", "Noto Sans", sans-serif; font-size: 8.600px; letter-spacing: -.22px; }
.s-tabs { display: flex; background: #ba9d6b; border-bottom: 1px solid #8d7751; }
.s-tab { width: 77.900px; flex: none; display: flex; align-items: center; gap: 5px; padding-left: 7px; border-right: 1px solid #9a8258; color: #2a2318; }
.s-tab svg { width: 11px; height: 11px; }
.s-tab span { max-width: 64px; overflow: hidden; -webkit-mask-image: linear-gradient(90deg, #000 80%, transparent); mask-image: linear-gradient(90deg, #000 80%, transparent); }
.s-tab.last span { -webkit-mask-image: none; mask-image: none; }
.s-tab svg + span { max-width: 47px; }
.s-tab span.short { max-width: 33px; }
.s-tab .snd { width: 10px; height: 10px; }
.s-tab.on { background: #fff; border-top: 1.500px solid #2a86e8; gap: 7px; }
.s-tab .sx { width: 7px; height: 7px; }
.s-plus { width: 10px; height: 10px; margin: 7px 0 0 7px; }
.s-win { display: flex; gap: 11px; margin: 3px 0 0 auto; }
.s-win svg { width: 8px; height: 8px; }
.s-close { margin-left: 6px; width: 33px; height: 13px; margin-right: 2px; background: #c75050; display: grid; place-items: center; }
.s-close svg { width: 6px; height: 6px; }
.s-bar { display: grid; grid-template-columns: 27px 22px 26px 20px 607px 1fr; align-items: center; background: #fafafb; }
.s-bar svg { width: 13px; height: 13px; justify-self: center; }
.s-back { width: 24px; height: 24px; border-radius: 50%; border: 1px solid #ccc; margin-left: 2px; display: grid; place-items: center; }
.s-url { margin-left: 74px; width: 598px; justify-self: start; height: 22px; border: 1px solid #bbb; background: #fff; display: grid; grid-template-columns: 20px 4px 17px 493px 21px 20px 21px; align-items: center; font-size: 9.500px; color: #888; letter-spacing: -.1px; }
.s-bar .s-url svg { width: 11px; height: 11px; }
.s-url i { width: 1px; height: 14px; background: #ccc; }
.s-url b { color: #333; }
.s-ext { display: grid; grid-template-columns: 23px 23.300px 23.300px 22px 27px 28px; justify-content: end; justify-items: center; align-items: center; }
.s-ext svg { width: 12px; height: 12px; }
.ublock { position: relative; }
.ublock em { position: absolute; left: 7px; top: -5px; width: 8px; height: 9px; background: #555; color: #fff; font-size: 7px; line-height: 9px; text-align: center; }
.s-marks { display: grid; grid-template-columns: 17px 100px 16px 100px 15px 100px 15px 46px 13px 103px 15px 100px 15px 102px 15px 97px 20px 14px 70px; padding-left: 7px; align-items: center; background: #fafafb; border-bottom: 1px solid #ddd; letter-spacing: -.28px; }
.s-marks svg { width: 11px; height: 11px; }
.wr { color: #2a3a9a; font-weight: bold; font-size: 8px; line-height: 10px; padding-left: 1px; }
.wr b { color: #d98030; }

.cisco { display: flex; padding: 14px 0 0 17px; }
.cisco-logo { width: 74px; }
.cisco-logo b { display: block; margin: 0 0 0 4px; font: 800 18px/17px "Open Sans", sans-serif; letter-spacing: .8px; color: #4db3dc; }
.academy { height: 36px; margin-top: 8px; font-size: 21px; line-height: 34px; font-weight: 300; font-family: Inter, sans-serif; letter-spacing: -.4px; background: linear-gradient(90deg, #55b4dc, #4c9ed0 24%, #6a55a8 38%, #9a3f80 50%, #dc4a55 60%, #ee8a4a 70%, #eec04a 85%, #7cba5a 98%); -webkit-background-clip: text; background-clip: text; color: transparent; }
.rainbow { background: linear-gradient(90deg, #1a9cc4, #2c6cac 22%, #5b3090 32%, #c02850 46%, #e07030 57%, #e8b83a 67%, #8cb83c 78%, #3d9a3d); }
.crumbs { display: flex; align-items: center; font: 12px "Liberation Sans", Arial, sans-serif; letter-spacing: -.19px; color: #444; background: linear-gradient(#fff, #f3f3f4); border-bottom: 1px solid #ddd; }
.crumbs i { width: 32px; height: 30px; border-right: 1px solid #ddd; display: grid; place-items: center; margin-right: 16px; }
.crumbs .sep { margin: 0 7px 0 8px; }

.course { display: grid; grid-template-columns: 114px 12px 213px 4px 1fr; font-family: "Liberation Sans", Arial, sans-serif; letter-spacing: 0; overflow: hidden; }
.toc { overflow: hidden; font-size: 9.400px; line-height: 11.600px; color: #555; }
.toc div { height: 34px; padding-top: 5px; border-bottom: 1px solid #d4d4d4; position: relative; }
.toc div.first { height: 33px; }
.toc .h1 { padding-left: 12px; }
.toc .h2 { padding-left: 18px; }
.toc .h3 { padding-left: 23.500px; }
.toc div.three { height: 45.700px; }
.toc div.four { height: 57px; }
.toc .cur { background: #d5e9fb; }
.unfolded::before, .folded::before { content: ""; position: absolute; left: 3px; top: 6px; width: 5px; height: 5px; border: solid #bbb; border-width: 0 1px 1px 0; transform: rotate(45deg); }
.folded::before { left: 1px; top: 8px; transform: rotate(-45deg); }
.toc .h2::before { margin-left: 5px; }
.vscroll { background: #f0f0f1; border-right: 1px solid #ccc; display: flex; flex-direction: column; align-items: center; padding: 4px 0; }
.vscroll i { width: 11px; height: 222px; margin: 3px 0 auto; background: #cccdcf; }
.vscroll svg, .lscroll svg { width: 7px; height: 5px; color: #222; }
.up { transform: scaleY(-1); }
.lesson { margin: 5px 0 0 6px; width: 214px; }
.lesson header { height: 57px; padding: 6px 8px 0; background: #f1eff2; border: 1px solid #ccc; border-bottom: 2px solid #999; border-radius: 3px 3px 0 0; color: #9b1fa0; }
.lesson h2 { font-size: 11.600px; line-height: 12.800px; padding-bottom: .5px; border-bottom: 3px solid #7a1590; }
.lesson h3 { font-size: 9.600px; line-height: 12px; margin-top: 3px; }
.lesson-body { position: relative; margin-top: 4px; height: 255px; background: #f1f0f2; border: 1px solid #ccc; border-bottom: 3px solid #999; border-radius: 0 0 3px 3px; display: grid; grid-template-columns: 200px 11px; }
.lesson-text { height: 251px; overflow: hidden; padding-left: 26.500px; font-size: 9.900px; line-height: 12.530px; color: #555; letter-spacing: -.22px; }
.lesson-text p { margin-bottom: 9.400px; position: relative; }
.lesson-text p:first-child { margin-top: -6px; }
.lesson-text b { font-weight: bold; color: #444; letter-spacing: -.12px; }
.li::before { content: ""; position: absolute; left: -9px; top: 5px; width: 4px; height: 4px; border-radius: 50%; background: #333; }
.lscroll { display: flex; flex-direction: column; align-items: center; padding: 5px 0 3px; background: #f7f7f8; }
.lscroll i { width: 11px; height: 57px; margin: 79px 0 auto; background: #cbcacd; }
.cursor { position: absolute; left: 165px; top: 134px; }
.lesson footer { display: flex; gap: 5.700px; margin-top: 7px; height: 23px; }
.lesson footer button { width: 35px; border-radius: 3px; background: linear-gradient(#13a8e4, #0484bb); display: grid; place-items: center; }
.lesson footer svg { width: 12px; height: 12px; }
.lesson footer button i { width: 17px; height: 11px; background: linear-gradient(#8aaab8, #6f98a6); border: 1px solid #3d6e84; }
.lesson footer span { width: 46px; border: 1px solid #d4d4d4; background: #fff; font: 9px/22px "DejaVu Sans", sans-serif; letter-spacing: -.1px; text-align: center; color: #555; }
.strip { width: 4px; margin: 5px 0 0 10px; height: 316px; background: #cfeaf6; }
.strip i { display: block; width: 4px; height: 35px; background: #0c9fdd; position: relative; top: 141px; }
.figure { margin-left: 142.500px; padding-top: 25px; }
.diagram { display: flex; gap: 5.500px; height: 111px; }
.layer { width: 74px; padding-top: 41px; background: #fff1b5; text-align: center; font-weight: bold; font-size: 8px; line-height: 11px; color: #333; letter-spacing: .15px; }
.cols { width: 267px; padding: 7px 3px 4px 4px; background: #fff1b5; display: grid; grid-template-columns: repeat(5, 49.200px); gap: 3.500px; }
.cols div { background: #d5d3d6; padding: 0 2px; }
.cols p { height: 31px; display: grid; place-content: center; text-align: center; font-size: 7.700px; line-height: 11px; letter-spacing: -.2px; color: #333; }
.cols b { display: block; height: 17px; margin-bottom: 5.300px; border-radius: 3px; background: linear-gradient(#0a8ace 60%, #08a0e4); color: #fff; font: bold 8px/17px "Liberation Sans", Arial, sans-serif; text-align: center; letter-spacing: .1px; }
.hint { margin-top: 156px; font-size: 7.400px; color: #333; letter-spacing: .35px; }

.s-task { background: repeating-linear-gradient(115deg, #ffffff08 0 3px, #0000 5px 11px, #00000012 13px 17px), linear-gradient(90deg, #57452f, #685338 20%, #54432e 38%, #665237 60%, #5c4a32 80%, #6b5a3c); display: grid; grid-template-columns: 36px 12px 43px 43px 43px 41px 49px 41px 43px 44px 41px 43px 43px 42px 43px 43px 42px 41px 42px 17px 37px 12px 21px 17px 19px 27px 58px; align-items: center; justify-items: center; color: #fff; }
.s-task i { display: grid; place-items: center; height: 28px; }
.s-task i svg:not([width]) { width: 22px; height: 22px; }
.s-task .run { width: 41px; background: #ffffff30; border: 1px solid #ffffff50; }
.s-task .hot { width: 36px; background: #ffffff70; border-color: #fffb; box-shadow: 3px 0 0 -1px #ffffff50; }
.s-task .grip { width: 6px; height: 22px; background: radial-gradient(circle, #222 40%, transparent 50%) 0 0 / 2px 2px; }
.esp { font-size: 8.500px; }
.s-task .s-clock { font-size: 8.500px; line-height: 12px; text-align: center; letter-spacing: -.2px; padding-top: 3px; }

.share { position: absolute; left: 343px; top: 74px; width: 301px; height: 23px; background: #fff; border: 1px solid #a5a5a5; display: grid; grid-template-columns: 17px 19px 148px 86px 14px 14px; align-items: center; font-size: 8.600px; letter-spacing: -.17px; }
.share b { width: 79px; height: 16px; border-radius: 2px; background: #0560dd; color: #fff; text-align: center; line-height: 16px; letter-spacing: -.25px; }
.dots { width: 3px; height: 13px; margin-left: 4px; background: repeating-linear-gradient(#999 0 1px, #fff 1px 3px); }
.bar { width: 1px; height: 18px; background: #ddd; }
.min { width: 12px; height: 14px; border-radius: 3px; background: linear-gradient(#222, #222) center 10px / 6px 2px no-repeat #e2e2e2; margin-left: -5px; }
.viewing { position: absolute; left: 343px; top: 12px; width: 300px; height: 34px; border-radius: 17px; border: 1px solid #ddd; background: #ffffffe0; font: 14px/36px "Liberation Sans", Arial, sans-serif; letter-spacing: 0; text-align: center; color: #333; }

/* meeting controls */
.controls { display: flex; padding: 18px 0 0 465px; gap: 8px; font-size: 16px; color: #222; }
.pill { height: 44px; border-radius: 22px; background: #fff; box-shadow: 0 2px 6px #d8d8d8; display: flex; align-items: center; }
.pill span { padding-top: 1px; }
.p1 { width: 207px; padding-left: 15px; }
.p1 span { margin-left: 9px; width: 150px; text-align: left; }
.p2 { width: 161px; padding-left: 14px; }
.p2 span { margin-left: 8px; width: 103px; text-align: left; }
.p3 { width: 130px; padding-left: 14px; background: #dedede; color: #acacac; box-shadow: none; }
.p3 span { margin-left: 7px; }
.dn { width: 10px; height: 6px; }
.round { width: 44px; height: 44px; border-radius: 50%; background: #fff; box-shadow: 0 2px 6px #d8d8d8; display: grid; place-items: center; }
.emoji svg { margin-top: 4px; }
.round.end { background: #d4371c; }
.side { margin: 1px 0 0 188px; height: 40px; width: 249px; border-radius: 20px; background: #fff; box-shadow: 0 2px 6px #d8d8d8; display: grid; grid-template-columns: 130px 79px 40px; font-size: 14px; }
.side button { display: flex; align-items: center; position: relative; }
.side .part, .side .chat { border-right: 1px solid #e4e4e4; }
.part svg { margin: 2px 7px 0 12px; }
.part em { position: absolute; left: 26px; top: 6px; width: 8px; height: 8px; border-radius: 50%; background: #d4371c; }
.chat svg { margin: 2px 8px 0 12px; }
.more svg { margin: 5px 0 0 13px; }

/* taskbar */
.taskbar { display: flex; color: #fff; background: linear-gradient(90deg, #262430 0, #262430 48px, #37292f 392px, #4a1f21 470px, #48201f 540px, #2c262a 600px, #282529 640px, #3c3135 710px, #4a383b 780px, #2a2425 850px, #211f22 1000px, #1e1e28 1200px, #20202e 1290px, #1a1a1d 1380px, #17171a); }
.start { width: 48px; display: grid; place-items: center; }
.search { width: 344px; margin-right: -1px; background: #f1f1f1; border: 1px solid #b9b9b9; display: flex; align-items: center; padding-left: 11px; gap: 10px; color: #333; font-size: 14px; letter-spacing: -.35px; }
.app { width: 49px; display: grid; place-items: center; position: relative; }
.app svg:not([width]) { width: 24px; height: 24px; }
.open::after { content: ""; position: absolute; left: 4px; right: 4px; bottom: 0; height: 2px; background: #76b9ed; }
.taskbar .front { background: #ffffff22; }
.front::after { left: 0; right: 0; }
.multi::after { background: linear-gradient(90deg, #76b9ed 78%, #4a7596 78%); }
.tray { margin-left: auto; display: grid; grid-template-columns: 24px 24px 24px 25px 25px 66px 44px 11px; align-items: center; justify-items: center; }
.tray svg { width: 18px; height: 18px; }
.clock { font-size: 11.500px; line-height: 18px; text-align: center; letter-spacing: -.25px; }
.tray i { width: 1px; height: 40px; background: #777; }

.activate { position: absolute; left: 1258px; top: 773px; color: #a4a4a4cc; font-size: 14px; letter-spacing: .12px; pointer-events: none; }
.activate p:first-child { font-size: 19px; line-height: 28px; }
.activate p + p { line-height: 18px; }
```
